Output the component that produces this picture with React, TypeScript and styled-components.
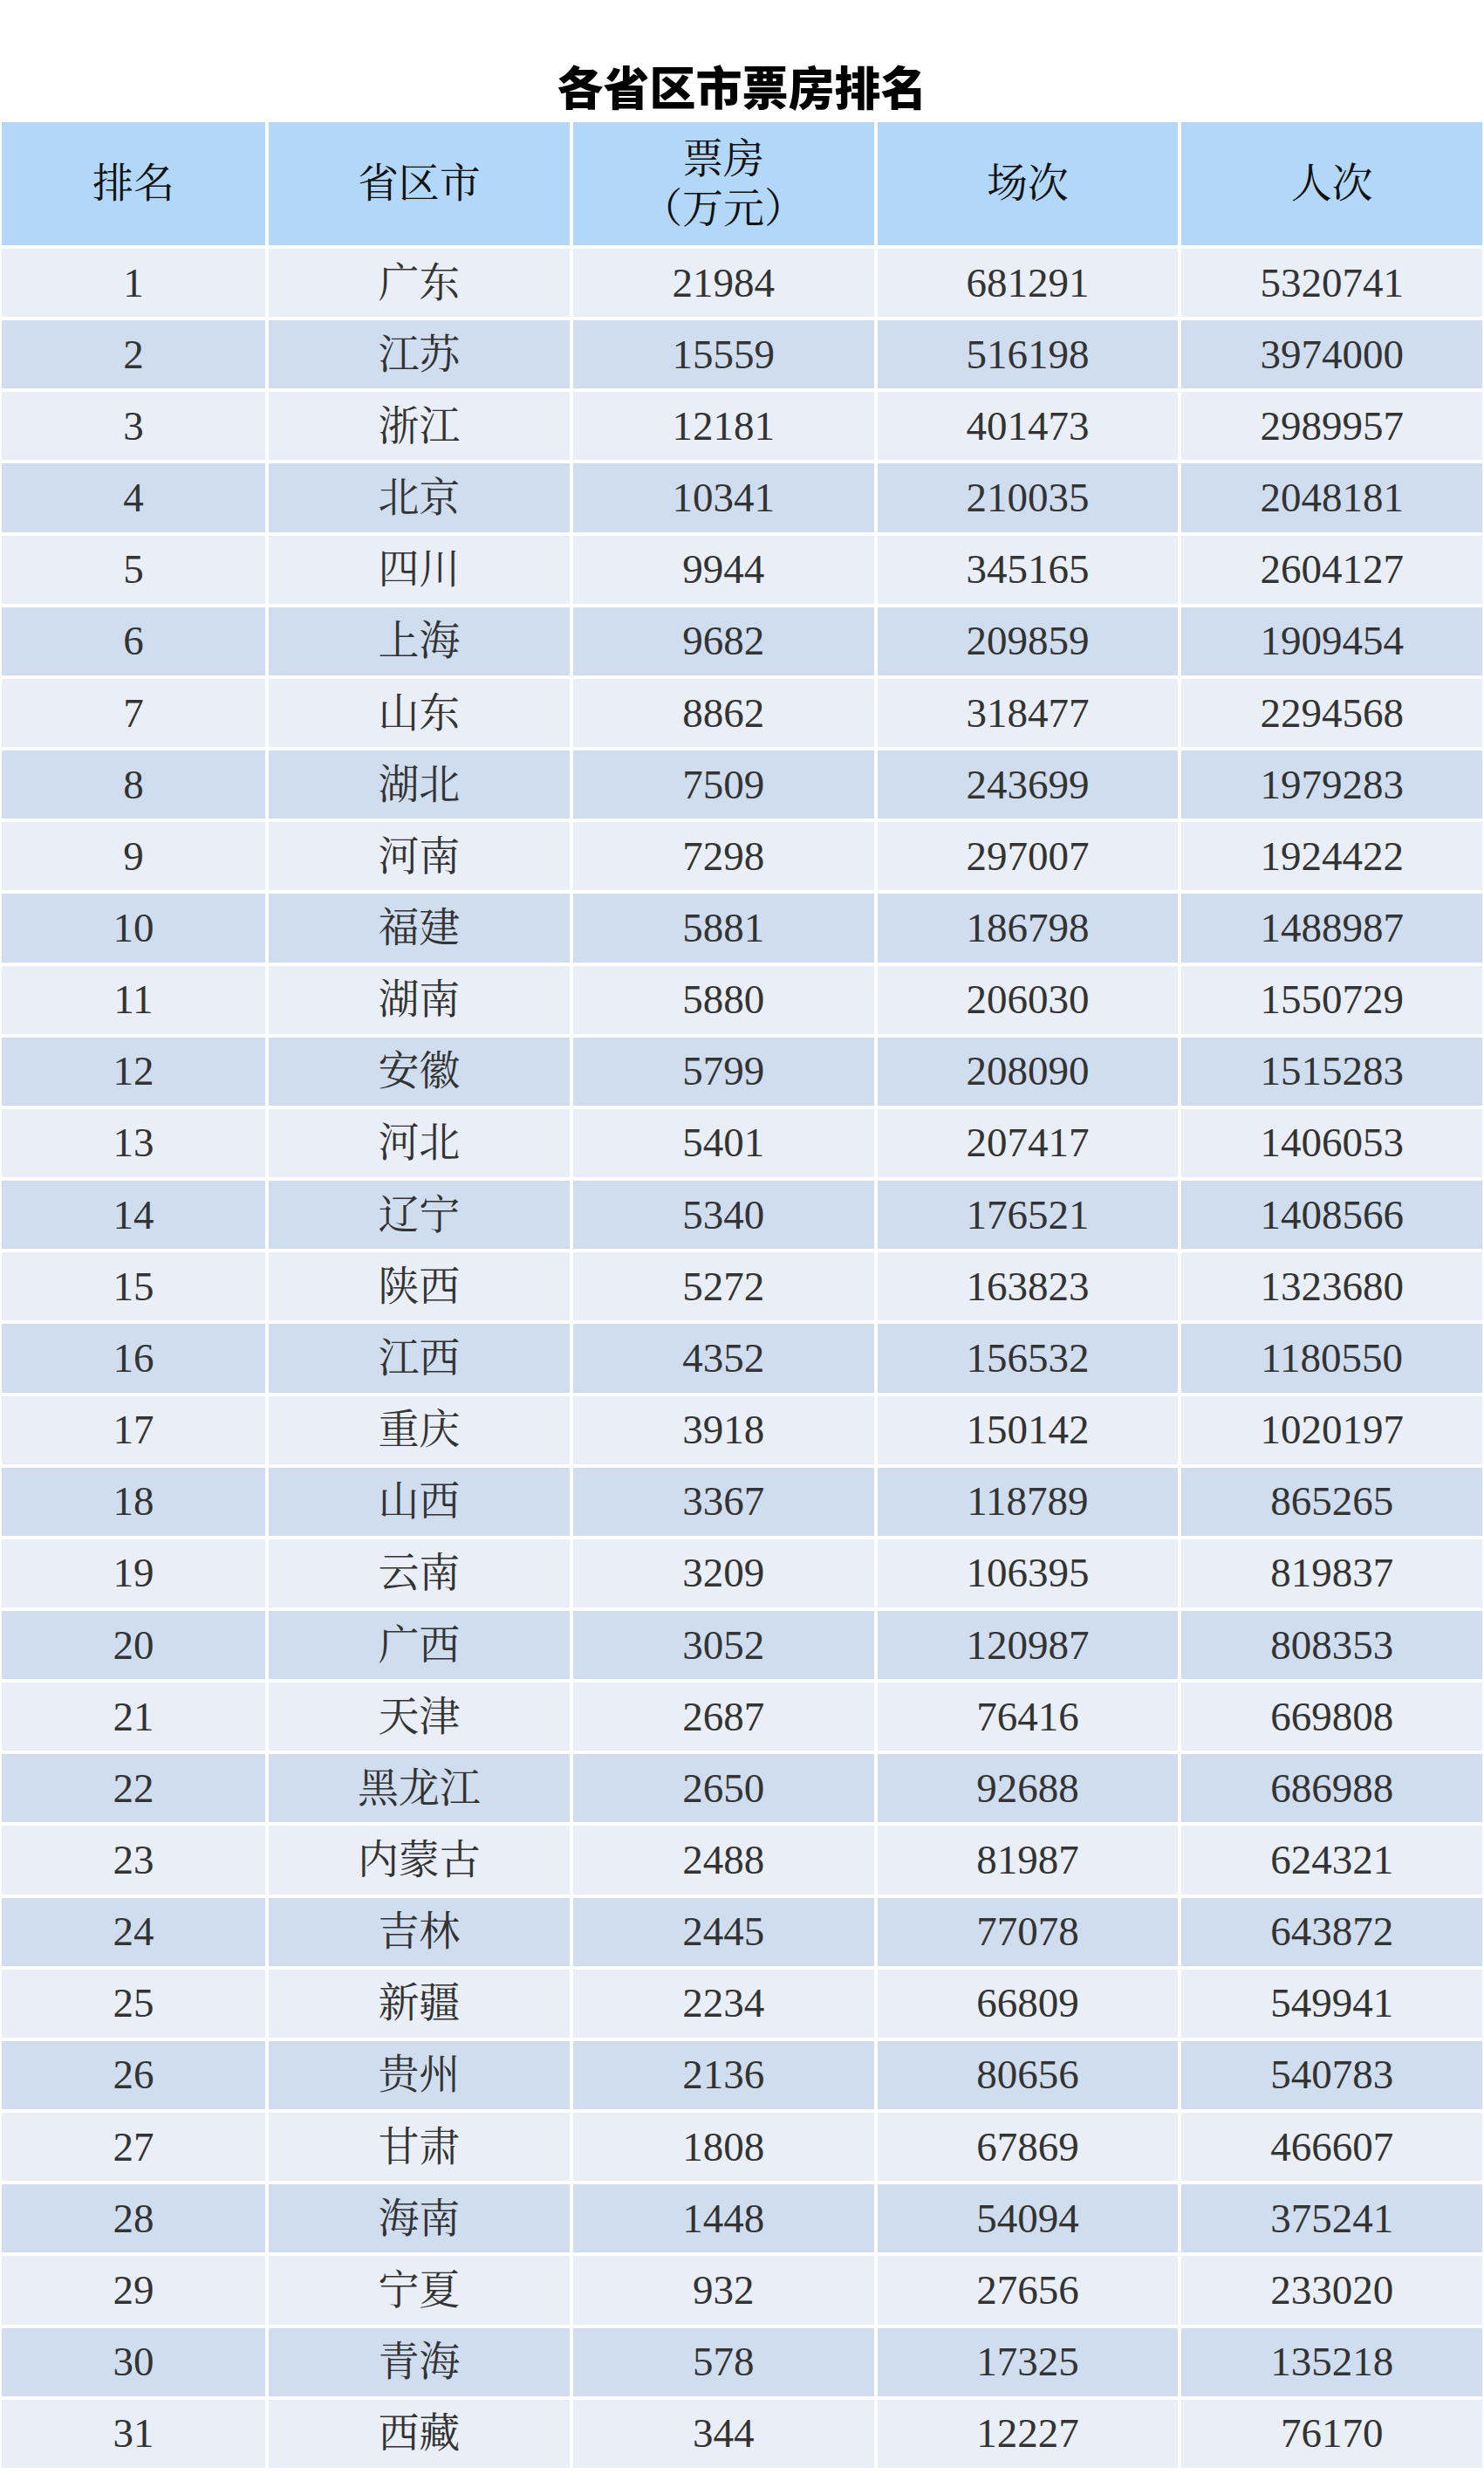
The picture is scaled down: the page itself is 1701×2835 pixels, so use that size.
import React from 'react'
import styled, { createGlobalStyle } from 'styled-components'

const GlobalStyle = createGlobalStyle`
  html, body {
    margin: 0;
    padding: 0;
    background: #ffffff;
  }
`

type Row = [number, string, number, number, number]

const rows: Row[] = [
  [1, '广东', 21984, 681291, 5320741],
  [2, '江苏', 15559, 516198, 3974000],
  [3, '浙江', 12181, 401473, 2989957],
  [4, '北京', 10341, 210035, 2048181],
  [5, '四川', 9944, 345165, 2604127],
  [6, '上海', 9682, 209859, 1909454],
  [7, '山东', 8862, 318477, 2294568],
  [8, '湖北', 7509, 243699, 1979283],
  [9, '河南', 7298, 297007, 1924422],
  [10, '福建', 5881, 186798, 1488987],
  [11, '湖南', 5880, 206030, 1550729],
  [12, '安徽', 5799, 208090, 1515283],
  [13, '河北', 5401, 207417, 1406053],
  [14, '辽宁', 5340, 176521, 1408566],
  [15, '陕西', 5272, 163823, 1323680],
  [16, '江西', 4352, 156532, 1180550],
  [17, '重庆', 3918, 150142, 1020197],
  [18, '山西', 3367, 118789, 865265],
  [19, '云南', 3209, 106395, 819837],
  [20, '广西', 3052, 120987, 808353],
  [21, '天津', 2687, 76416, 669808],
  [22, '黑龙江', 2650, 92688, 686988],
  [23, '内蒙古', 2488, 81987, 624321],
  [24, '吉林', 2445, 77078, 643872],
  [25, '新疆', 2234, 66809, 549941],
  [26, '贵州', 2136, 80656, 540783],
  [27, '甘肃', 1808, 67869, 466607],
  [28, '海南', 1448, 54094, 375241],
  [29, '宁夏', 932, 27656, 233020],
  [30, '青海', 578, 17325, 135218],
  [31, '西藏', 344, 12227, 76170],
]

const headers = ['排名', '省区市', '票房\n（万元）', '场次', '人次']

const Page = styled.div`
  width: 1701px;
  min-height: 2835px;
  background: #ffffff;
`

const Title = styled.h1`
  margin: 0;
  height: 140px;
  box-sizing: border-box;
  padding-bottom: 15px;
  display: flex;
  align-items: flex-end;
  justify-content: center;
  font-family: 'Noto Sans CJK SC', 'Noto Sans', sans-serif;
  font-size: 53px;
  line-height: 53px;
  font-weight: 900;
  color: #000000;
`

const Table = styled.div`
  display: grid;
  grid-template-columns: 302px repeat(4, 1fr);
  grid-template-rows: 141px;
  grid-auto-rows: 78.17px;
  gap: 4px;
  padding: 0 2px;
`

type Tone = 'head' | 'odd' | 'even'

const toneColor: Record<Tone, string> = {
  head: '#b2d7f9',
  odd: '#e9eef7',
  even: '#d0ddef',
}

const Cell = styled.div<{ $tone: Tone }>`
  display: flex;
  align-items: center;
  justify-content: center;
  text-align: center;
  white-space: pre-line;
  background: ${p => toneColor[p.$tone]};
  color: ${p => (p.$tone === 'head' ? '#111111' : '#333333')};
  font-family: 'Liberation Serif', 'Noto Serif CJK SC', 'Source Han Serif SC',
    'Noto Sans CJK SC', serif;
  font-size: 47px;
  line-height: 57px;
  font-weight: 400;
`

export default function App() {
  return (
    <Page>
      <GlobalStyle />
      <Title>各省区市票房排名</Title>
      <Table>
        {headers.map(h => (
          <Cell key={h} $tone="head">
            {h}
          </Cell>
        ))}
        {rows.map((r, i) =>
          r.map((v, j) => (
            <Cell key={`${i}-${j}`} $tone={i % 2 === 0 ? 'odd' : 'even'}>
              {v}
            </Cell>
          ))
        )}
      </Table>
    </Page>
  )
}
